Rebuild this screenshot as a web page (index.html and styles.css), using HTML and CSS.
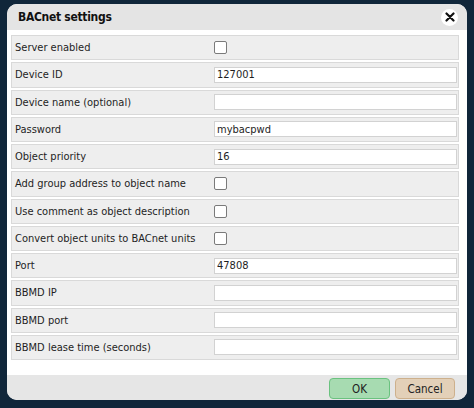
FILE: index.html
```html
<!DOCTYPE html>
<html>
<head>
<meta charset="utf-8">
<link rel="stylesheet" href="styles.css">
</head>
<body>
<div class="dialog">
  <div class="titlebar">
    <span class="title">BACnet settings</span>
    <span class="close"><svg width="10" height="10" viewBox="0 0 10 10"><path d="M1.5 1.5 L8.5 8.5 M8.5 1.5 L1.5 8.5" stroke="#111" stroke-width="2.2" stroke-linecap="round"/></svg></span>
  </div>
  <div class="content">
    <div class="rows">
      <div class="row"><span class="label">Server enabled</span><span class="value"><input type="checkbox" class="check"></span></div>
      <div class="row"><span class="label">Device ID</span><span class="value"><input type="text" class="field" value="127001"></span></div>
      <div class="row"><span class="label">Device name (optional)</span><span class="value"><input type="text" class="field" value=""></span></div>
      <div class="row"><span class="label">Password</span><span class="value"><input type="text" class="field" value="mybacpwd"></span></div>
      <div class="row"><span class="label">Object priority</span><span class="value"><input type="text" class="field" value="16"></span></div>
      <div class="row"><span class="label">Add group address to object name</span><span class="value"><input type="checkbox" class="check"></span></div>
      <div class="row"><span class="label">Use comment as object description</span><span class="value"><input type="checkbox" class="check"></span></div>
      <div class="row"><span class="label">Convert object units to BACnet units</span><span class="value"><input type="checkbox" class="check"></span></div>
      <div class="row"><span class="label">Port</span><span class="value"><input type="text" class="field" value="47808"></span></div>
      <div class="row"><span class="label">BBMD IP</span><span class="value"><input type="text" class="field" value=""></span></div>
      <div class="row"><span class="label">BBMD port</span><span class="value"><input type="text" class="field" value=""></span></div>
      <div class="row"><span class="label">BBMD lease time (seconds)</span><span class="value"><input type="text" class="field" value=""></span></div>
    </div>
  </div>
  <div class="footer">
    <button class="btn ok">OK</button>
    <button class="btn cancel">Cancel</button>
  </div>
</div>
</body>
</html>
```
FILE: styles.css
```css
html, body {
  margin: 0;
  padding: 0;
  background: #10263a;
  width: 474px;
  height: 408px;
  overflow: hidden;
}
body {
  font-family: "DejaVu Sans Condensed", "DejaVu Sans", sans-serif;
  font-size: 11px;
  color: #1e1e1e;
}
.dialog {
  margin: 4px 7px 0 7px;
  width: 460px;
  height: 396px;
  background: #fff;
  border-radius: 10px;
  overflow: hidden;
  display: flex;
  flex-direction: column;
}
.titlebar {
  height: 26px;
  flex: none;
  background: #e4e4e4;
  display: flex;
  align-items: center;
  justify-content: space-between;
  padding: 0 9px 0 11px;
}
.title {
  font-weight: bold;
  font-size: 12px;
  letter-spacing: -0.3px;
  color: #111;
}
.close {
  width: 17px;
  height: 17px;
  border-radius: 50%;
  background: #fff;
  display: flex;
  align-items: center;
  justify-content: center;
}
.content {
  flex: 1;
  padding: 5px 8px 0 4px;
}
.rows {
  display: grid;
  row-gap: 2px;
}
.row {
  height: 25.25px;
  box-sizing: border-box;
  border: 1px solid #d9d9d9;
  background: #eeeeee;
  display: grid;
  grid-template-columns: 202px 1fr;
  align-items: center;
}
.label {
  padding-left: 3px;
  white-space: nowrap;
}
.value {
  display: flex;
  align-items: center;
  padding-right: 1px;
}
.field {
  width: 100%;
  height: 16px;
  box-sizing: border-box;
  margin: 0;
  border: 1px solid #d2d2d2;
  background: #fff;
  padding: 0 2px;
  font-family: inherit;
  font-size: 11px;
  color: #1e1e1e;
  outline: none;
}
.check {
  appearance: none;
  -webkit-appearance: none;
  width: 13px;
  height: 13px;
  margin: 0;
  box-sizing: border-box;
  border: 1px solid #7a7a7a;
  border-radius: 2px;
  background: #fff;
}
.footer {
  height: 25px;
  flex: none;
  background: #e6e6e6;
  display: flex;
  justify-content: flex-end;
  align-items: flex-start;
  gap: 5px;
  padding: 3px 12px 0 0;
  box-sizing: border-box;
}
.btn {
  height: 21px;
  margin: 0;
  padding: 0;
  border-radius: 4px;
  font-family: inherit;
  font-size: 11.5px;
  color: #222;
}
.ok {
  width: 61px;
  background: #a7dbb1;
  border: 1px solid #6ac27f;
}
.cancel {
  width: 60px;
  background: #e3d0b8;
  border: 1px solid #cdb08c;
}
```
